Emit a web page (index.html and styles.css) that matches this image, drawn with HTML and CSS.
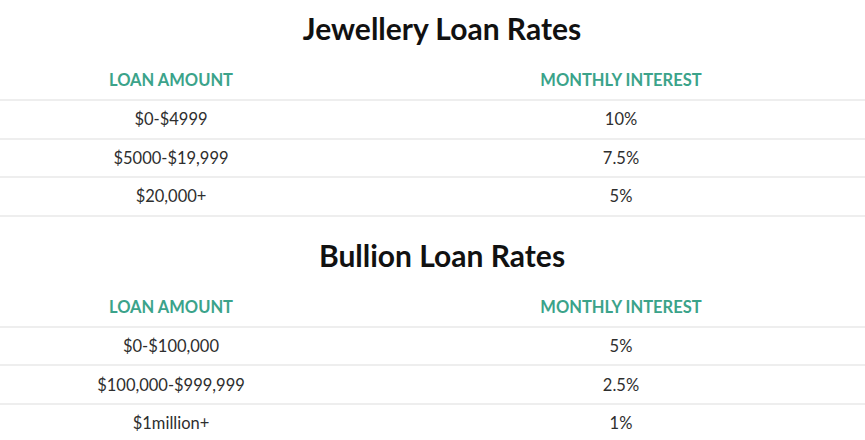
FILE: index.html
```html
<!DOCTYPE html>
<html>
<head>
<meta charset="utf-8">
<link rel="stylesheet" href="styles.css">
</head>
<body>
<section class="rates rates-first">
  <h2 class="rates-title">Jewellery Loan Rates</h2>
  <div class="rates-table">
    <div class="row head"><div class="cell c1">LOAN AMOUNT</div><div class="cell c2">MONTHLY INTEREST</div></div>
    <div class="row"><div class="cell c1">$0-$4999</div><div class="cell c2">10%</div></div>
    <div class="row"><div class="cell c1">$5000-$19,999</div><div class="cell c2">7.5%</div></div>
    <div class="row"><div class="cell c1">$20,000+</div><div class="cell c2">5%</div></div>
  </div>
</section>
<section class="rates">
  <h2 class="rates-title">Bullion Loan Rates</h2>
  <div class="rates-table">
    <div class="row head"><div class="cell c1">LOAN AMOUNT</div><div class="cell c2">MONTHLY INTEREST</div></div>
    <div class="row"><div class="cell c1">$0-$100,000</div><div class="cell c2">5%</div></div>
    <div class="row"><div class="cell c1">$100,000-$999,999</div><div class="cell c2">2.5%</div></div>
    <div class="row"><div class="cell c1">$1million+</div><div class="cell c2">1%</div></div>
  </div>
</section>
</body>
</html>
```
FILE: styles.css
```css
html, body {
  margin: 0;
  padding: 0;
  background: #ffffff;
  font-family: Lato, "Open Sans", sans-serif;
  color: #2e2e2e;
  overflow: hidden;
}
.rates {
  padding-top: 20px;
}
.rates-first {
  padding-top: 10px;
}
.rates-title {
  margin: 0;
  padding-left: 19px;
  text-align: center;
  font-size: 30px;
  font-weight: 700;
  line-height: 36px;
  color: #111111;
}
.rates-table {
  display: flex;
  flex-direction: column;
}
.row {
  display: grid;
  grid-template-columns: 342px 1fr;
  border-bottom: 2px solid #eeeeee;
  height: 36.6px;
  align-items: center;
  font-size: 16.5px;
}
.row.head {
  height: auto;
  padding: 24px 0 9px;
  line-height: 20px;
  font-weight: 700;
  font-size: 16.5px;
  color: #3ba38a;
}
.cell {
  text-align: center;
}
.c2 {
  padding-left: 35px;
}
```
